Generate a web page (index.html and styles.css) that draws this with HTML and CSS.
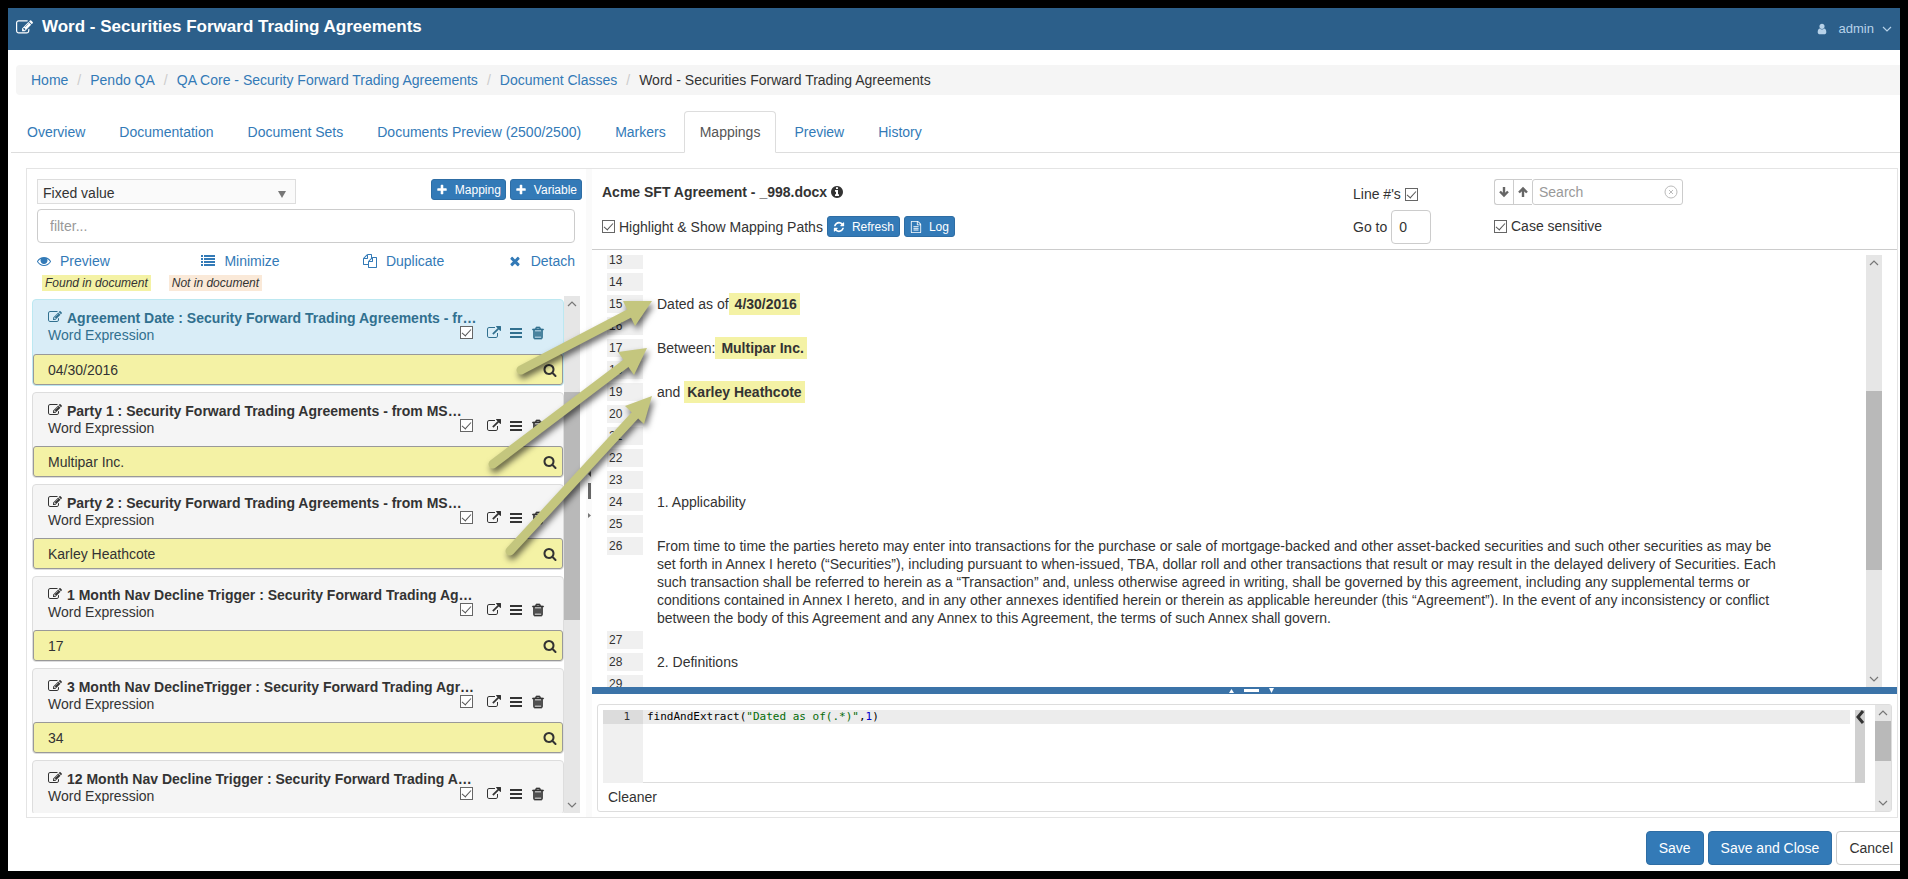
FILE: index.html
```html
<!DOCTYPE html>
<html lang="en">
<head>
<meta charset="utf-8">
<meta name="viewport" content="width=device-width, initial-scale=1">
<title>Word - Securities Forward Trading Agreements</title>
<link rel="stylesheet" href="styles.css">
</head>
<body>
<svg class="sprite" aria-hidden="true">
  <symbol id="i-edit" viewBox="0 0 1792 1792"><path d="M888 1184l116-116-152-152-116 116v56h96v96h56zm440-720q-16-16-33 1l-350 350q-17 17-1 33t33-1l350-350q17-17 1-33zm80 594v190q0 119-84.500 203.500t-203.500 84.500h-832q-119 0-203.500-84.500t-84.500-203.500v-832q0-119 84.500-203.500t203.500-84.500h832q63 0 117 25 15 7 18 23 3 17-9 29l-49 49q-14 14-32 8-23-6-45-6h-832q-66 0-113 47t-47 113v832q0 66 47 113t113 47h832q66 0 113-47t47-113v-126q0-13 9-22l64-64q15-15 35-7t20 29zm-96-738l288 288-672 672h-288v-288zm444 132l-92 92-288-288 92-92q28-28 68-28t68 28l152 152q28 28 28 68t-28 68z"/></symbol>
  <symbol id="i-external" viewBox="0 0 1792 1792"><path d="M1408 928v320q0 119-84.500 203.500t-203.500 84.500h-832q-119 0-203.500-84.500t-84.500-203.500v-832q0-119 84.500-203.500t203.500-84.500h704q14 0 23 9t9 23v64q0 14-9 23t-23 9h-704q-66 0-113 47t-47 113v832q0 66 47 113t113 47h832q66 0 113-47t47-113v-320q0-14 9-23t23-9h64q14 0 23 9t9 23zm384-864v512q0 26-19 45t-45 19-45-19l-176-176-652 652q-10 10-23 10t-23-10l-114-114q-10-10-10-23t10-23l652-652-176-176q-19-19-19-45t19-45 45-19h512q26 0 45 19t19 45z"/></symbol>
  <symbol id="i-bars" viewBox="0 0 14 14"><path d="M1 2h12v2H1zM1 6h12v2H1zM1 10h12v2H1z"/></symbol>
  <symbol id="i-trash" viewBox="0 0 1792 1792"><path d="M704 736v576q0 14-9 23t-23 9h-64q-14 0-23-9t-9-23v-576q0-14 9-23t23-9h64q14 0 23 9t9 23zm256 0v576q0 14-9 23t-23 9h-64q-14 0-23-9t-9-23v-576q0-14 9-23t23-9h64q14 0 23 9t9 23zm256 0v576q0 14-9 23t-23 9h-64q-14 0-23-9t-9-23v-576q0-14 9-23t23-9h64q14 0 23 9t9 23zm128 724v-948h-896v948q0 22 7 40.500t14.500 27 10.500 8.500h832q3 0 10.500-8.500t14.500-27 7-40.500zm-672-1076h448l-48-117q-7-9-17-11h-317q-10 2-17 11zm928 32v64q0 14-9 23t-23 9h-96v948q0 83-47 143.500t-113 60.500h-832q-66 0-113-58.500t-47-141.500v-952h-96q-14 0-23-9t-9-23v-64q0-14 9-23t23-9h309l70-167q15-37 54-63t79-26h320q40 0 79 26t54 63l70 167h309q14 0 23 9t9 23z" stroke="currentColor" stroke-width="90"/></symbol>
  <symbol id="i-search" viewBox="0 0 1792 1792"><path d="M1216 832q0-185-131.500-316.500t-316.500-131.500-316.500 131.500-131.500 316.500 131.500 316.500 316.500 131.500 316.500-131.500 131.500-316.500zm512 832q0 52-38 90t-90 38q-54 0-90-38l-343-342q-179 124-399 124-143 0-273.500-55.500t-225-150-150-225-55.500-273.500 55.500-273.500 150-225 225-150 273.500-55.500 273.500 55.500 225 150 150 225 55.500 273.500q0 220-124 399l343 343q37 37 37 90z"/></symbol>
  <symbol id="i-refresh" viewBox="0 0 1792 1792"><path d="M1639 1056q0 5-1 7-64 268-268 434.500t-478 166.500q-146 0-282.500-55t-243.500-157l-129 129q-19 19-45 19t-45-19-19-45v-448q0-26 19-45t45-19h448q26 0 45 19t19 45-19 45l-137 137q71 66 161 102t187 36q134 0 250-65t186-179q11-17 53-117 8-23 30-23h192q13 0 22.500 9.500t9.500 22.500zm25-800v448q0 26-19 45t-45 19h-448q-26 0-45-19t-19-45 19-45l138-138q-148-137-349-137-134 0-250 65t-186 179q-11 17-53 117-8 23-30 23h-199q-13 0-22.500-9.500t-9.500-22.500v-7q65-268 270-434.500t480-166.500q146 0 284 55.500t245 156.500l130-129q19-19 45-19t45 19 19 45z"/></symbol>
  <symbol id="i-plus" viewBox="0 0 1792 1792"><path d="M1600 736v192q0 40-28 68t-68 28h-416v416q0 40-28 68t-68 28h-192q-40 0-68-28t-28-68v-416h-416q-40 0-68-28t-28-68v-192q0-40 28-68t68-28h416v-416q0-40 28-68t68-28h192q40 0 68 28t28 68v416h416q40 0 68 28t28 68z"/></symbol>
  <symbol id="i-eye" viewBox="0 0 1792 1792"><path d="M1664 960q-152-236-381-353 61 104 61 225 0 185-131.500 316.500t-316.500 131.500-316.500-131.500-131.500-316.500q0-121 61-225-229 117-381 353 133 205 333.500 326.500t434.500 121.500 434.500-121.500 333.500-326.500zm128 0q0 34-20 69-140 230-376.500 368.500t-499.500 138.500-499.500-139-376.500-368q-20-35-20-69t20-69q140-229 376.500-368t499.500-139 499.500 139 376.500 368q20 35 20 69z"/><circle cx="896" cy="850" r="340"/></symbol>
  <symbol id="i-list" viewBox="0 0 14 14"><path d="M0 1h2v2H0zM3 1h11v2H3zM0 4h2v2H0zM3 4h11v2H3zM0 7h2v2H0zM3 7h11v2H3zM0 10h2v2H0zM3 10h11v2H3z"/></symbol>
  <symbol id="i-copy" viewBox="0 0 1792 1792"><path d="M1696 384q40 0 68 28t28 68v1216q0 40-28 68t-68 28h-960q-40 0-68-28t-28-68v-288h-544q-40 0-68-28t-28-68v-672q0-40 20-88t48-76l408-408q28-28 76-48t88-20h416q40 0 68 28t28 68v328q68-40 128-40h416zm-544 213l-299 299h299v-299zm-640-384l-299 299h299v-299zm196 647l316-316v-416h-384v416q0 40-28 68t-68 28h-416v640h512v-256q0-40 20-88t48-76zm956 804v-1152h-384v416q0 40-28 68t-68 28h-416v640h896z"/></symbol>
  <symbol id="i-times" viewBox="0 0 1792 1792"><path d="M1490 1322q0 40-28 68l-136 136q-28 28-68 28t-68-28l-294-294-294 294q-28 28-68 28t-68-28l-136-136q-28-28-28-68t28-68l294-294-294-294q-28-28-28-68t28-68l136-136q28-28 68-28t68 28l294 294 294-294q28-28 68-28t68 28l136 136q28 28 28 68t-28 68l-294 294 294 294q28 28 28 68z"/></symbol>
  <symbol id="i-info" viewBox="0 0 1536 1536"><path transform="translate(-128 -128)" d="M1152 1376v-160q0-14-9-23t-23-9h-96v-512q0-14-9-23t-23-9h-320q-14 0-23 9t-9 23v160q0 14 9 23t23 9h96v320h-96q-14 0-23 9t-9 23v160q0 14 9 23t23 9h448q14 0 23-9t9-23zm-128-896v-160q0-14-9-23t-23-9h-192q-14 0-23 9t-9 23v160q0 14 9 23t23 9h192q14 0 23-9t9-23zm640 416q0 209-103 385.500t-279.500 279.500-385.500 103-385.500-103-279.500-279.500-103-385.500 103-385.500 279.500-279.500 385.500-103 385.500 103 279.500 279.500 103 385.500z"/></symbol>
  <symbol id="i-file" viewBox="0 0 1792 1792"><path d="M1596 380q28 28 48 76t20 88v1152q0 40-28 68t-68 28h-1344q-40 0-68-28t-28-68v-1600q0-40 28-68t68-28h896q40 0 88 20t76 48zm-444-244v376h376q-10-29-22-41l-313-313q-12-12-41-22zm384 1528v-1024h-416q-40 0-68-28t-28-68v-416h-768v1536h1280zm-1024-864q0-14 9-23t23-9h704q14 0 23 9t9 23v64q0 14-9 23t-23 9h-704q-14 0-23-9t-9-23v-64zm736 224q14 0 23 9t9 23v64q0 14-9 23t-23 9h-704q-14 0-23-9t-9-23v-64q0-14 9-23t23-9h704zm0 256q14 0 23 9t9 23v64q0 14-9 23t-23 9h-704q-14 0-23-9t-9-23v-64q0-14 9-23t23-9h704z"/></symbol>
  <symbol id="i-user" viewBox="0 0 1792 1792"><path d="M1536 1399q0 109-62.500 187t-150.500 78h-854q-88 0-150.500-78t-62.500-187q0-85 8.500-160.500t31.500-152 58.500-131 94-89 134.500-34.500q131 128 313 128t313-128q76 0 134.500 34.500t94 89 58.500 131 31.500 152 8.500 160.500zm-256-887q0 159-112.500 271.500t-271.500 112.500-271.500-112.500-112.500-271.500 112.500-271.500 271.500-112.500 271.500 112.500 112.500 271.500z"/></symbol>
  <symbol id="i-down" viewBox="0 0 12 12"><path d="M6 1v8M2 5.500l4 4 4-4" fill="none" stroke="currentColor" stroke-width="2.400"/></symbol>
  <symbol id="i-up" viewBox="0 0 12 12"><path d="M6 11V3M2 6.500l4-4 4 4" fill="none" stroke="currentColor" stroke-width="2.400"/></symbol>
  <symbol id="i-chev-down" viewBox="0 0 10 10"><path d="M1 3l4 4 4-4" fill="none" stroke="currentColor" stroke-width="1.200"/></symbol>
  <symbol id="i-chev-up" viewBox="0 0 10 10"><path d="M1 7l4-4 4 4" fill="none" stroke="currentColor" stroke-width="1.200"/></symbol>
</svg>

<div class="window">
  <header class="topbar">
    <h1 class="topbar-title"><svg class="icon icon-lg"><use href="#i-edit"/></svg>Word - Securities Forward Trading Agreements</h1>
    <button class="user-menu" type="button"><svg class="icon-xs"><use href="#i-user"/></svg><span>admin</span><svg class="icon-sm"><use href="#i-chev-down"/></svg></button>
  </header>

  <nav class="breadcrumb" aria-label="Breadcrumb">
    <a href="#">Home</a><span class="sep">/</span><a href="#">Pendo QA</a><span class="sep">/</span><a href="#">QA Core - Security Forward Trading Agreements</a><span class="sep">/</span><a href="#">Document Classes</a><span class="sep">/</span><span>Word - Securities Forward Trading Agreements</span>
  </nav>

  <nav class="tabs" aria-label="Sections">
    <a class="tab" href="#">Overview</a>
    <a class="tab" href="#">Documentation</a>
    <a class="tab" href="#">Document Sets</a>
    <a class="tab" href="#">Documents Preview (2500/2500)</a>
    <a class="tab" href="#">Markers</a>
    <a class="tab tab-active" href="#" aria-current="page">Mappings</a>
    <a class="tab" href="#">Preview</a>
    <a class="tab" href="#">History</a>
  </nav>

  <main class="panel">
    <section class="side">
      <div class="side-tools">
        <div class="select-wrap">
          <select class="select" aria-label="Mapping type"><option>Fixed value</option></select>
          <svg class="caret" viewBox="0 0 8 7"><path d="M0 0h8L4 7z"/></svg>
        </div>
        <div class="btn-pair">
          <button class="btn-xs" type="button"><svg class="icon-xs"><use href="#i-plus"/></svg>Mapping</button>
          <button class="btn-xs" type="button"><svg class="icon-xs"><use href="#i-plus"/></svg>Variable</button>
        </div>
      </div>
      <input class="filter" type="text" placeholder="filter..." aria-label="Filter mappings">
      <div class="side-links">
        <a href="#"><svg class="icon"><use href="#i-eye"/></svg>Preview</a>
        <a href="#"><svg class="icon"><use href="#i-list"/></svg>Minimize</a>
        <a href="#"><svg class="icon"><use href="#i-copy"/></svg>Duplicate</a>
        <a href="#"><svg class="icon"><use href="#i-times"/></svg>Detach</a>
      </div>
      <div class="legend"><span class="legend-found">Found in document</span><span class="legend-missing">Not in document</span></div>

      <div class="list-wrap">
        <div class="list">
          <article class="map map-active">
            <div class="map-head">
              <h2 class="map-title"><svg class="icon"><use href="#i-edit"/></svg>Agreement Date : Security Forward Trading Agreements - fr…</h2>
              <p class="map-kind">Word Expression</p>
              <div class="map-actions"><input class="check" type="checkbox" checked aria-label="Enabled"><button class="icon-btn" type="button" aria-label="Open"><svg class="icon"><use href="#i-external"/></svg></button><button class="icon-btn" type="button" aria-label="Menu"><svg class="icon"><use href="#i-bars"/></svg></button><button class="icon-btn" type="button" aria-label="Delete"><svg class="icon"><use href="#i-trash"/></svg></button></div>
            </div>
            <div class="map-value"><input type="text" value="04/30/2016" aria-label="Agreement Date"><button class="icon-btn" type="button" aria-label="Find"><svg class="icon"><use href="#i-search"/></svg></button></div>
          </article>
          <article class="map">
            <div class="map-head">
              <h2 class="map-title"><svg class="icon"><use href="#i-edit"/></svg>Party 1 : Security Forward Trading Agreements - from MS…</h2>
              <p class="map-kind">Word Expression</p>
              <div class="map-actions"><input class="check" type="checkbox" checked aria-label="Enabled"><button class="icon-btn" type="button" aria-label="Open"><svg class="icon"><use href="#i-external"/></svg></button><button class="icon-btn" type="button" aria-label="Menu"><svg class="icon"><use href="#i-bars"/></svg></button><button class="icon-btn" type="button" aria-label="Delete"><svg class="icon"><use href="#i-trash"/></svg></button></div>
            </div>
            <div class="map-value"><input type="text" value="Multipar Inc." aria-label="Party 1"><button class="icon-btn" type="button" aria-label="Find"><svg class="icon"><use href="#i-search"/></svg></button></div>
          </article>
          <article class="map">
            <div class="map-head">
              <h2 class="map-title"><svg class="icon"><use href="#i-edit"/></svg>Party 2 : Security Forward Trading Agreements - from MS…</h2>
              <p class="map-kind">Word Expression</p>
              <div class="map-actions"><input class="check" type="checkbox" checked aria-label="Enabled"><button class="icon-btn" type="button" aria-label="Open"><svg class="icon"><use href="#i-external"/></svg></button><button class="icon-btn" type="button" aria-label="Menu"><svg class="icon"><use href="#i-bars"/></svg></button><button class="icon-btn" type="button" aria-label="Delete"><svg class="icon"><use href="#i-trash"/></svg></button></div>
            </div>
            <div class="map-value"><input type="text" value="Karley Heathcote" aria-label="Party 2"><button class="icon-btn" type="button" aria-label="Find"><svg class="icon"><use href="#i-search"/></svg></button></div>
          </article>
          <article class="map">
            <div class="map-head">
              <h2 class="map-title"><svg class="icon"><use href="#i-edit"/></svg>1 Month Nav Decline Trigger : Security Forward Trading Ag…</h2>
              <p class="map-kind">Word Expression</p>
              <div class="map-actions"><input class="check" type="checkbox" checked aria-label="Enabled"><button class="icon-btn" type="button" aria-label="Open"><svg class="icon"><use href="#i-external"/></svg></button><button class="icon-btn" type="button" aria-label="Menu"><svg class="icon"><use href="#i-bars"/></svg></button><button class="icon-btn" type="button" aria-label="Delete"><svg class="icon"><use href="#i-trash"/></svg></button></div>
            </div>
            <div class="map-value"><input type="text" value="17" aria-label="1 Month Nav Decline Trigger"><button class="icon-btn" type="button" aria-label="Find"><svg class="icon"><use href="#i-search"/></svg></button></div>
          </article>
          <article class="map">
            <div class="map-head">
              <h2 class="map-title"><svg class="icon"><use href="#i-edit"/></svg>3 Month Nav DeclineTrigger : Security Forward Trading Agr…</h2>
              <p class="map-kind">Word Expression</p>
              <div class="map-actions"><input class="check" type="checkbox" checked aria-label="Enabled"><button class="icon-btn" type="button" aria-label="Open"><svg class="icon"><use href="#i-external"/></svg></button><button class="icon-btn" type="button" aria-label="Menu"><svg class="icon"><use href="#i-bars"/></svg></button><button class="icon-btn" type="button" aria-label="Delete"><svg class="icon"><use href="#i-trash"/></svg></button></div>
            </div>
            <div class="map-value"><input type="text" value="34" aria-label="3 Month Nav Decline Trigger"><button class="icon-btn" type="button" aria-label="Find"><svg class="icon"><use href="#i-search"/></svg></button></div>
          </article>
          <article class="map">
            <div class="map-head">
              <h2 class="map-title"><svg class="icon"><use href="#i-edit"/></svg>12 Month Nav Decline Trigger : Security Forward Trading A…</h2>
              <p class="map-kind">Word Expression</p>
              <div class="map-actions"><input class="check" type="checkbox" checked aria-label="Enabled"><button class="icon-btn" type="button" aria-label="Open"><svg class="icon"><use href="#i-external"/></svg></button><button class="icon-btn" type="button" aria-label="Menu"><svg class="icon"><use href="#i-bars"/></svg></button><button class="icon-btn" type="button" aria-label="Delete"><svg class="icon"><use href="#i-trash"/></svg></button></div>
            </div>
          </article>
        </div>
        <div class="scrollbar scrollbar-list"><svg class="icon-sm"><use href="#i-chev-up"/></svg><span class="track"></span><span class="thumb"></span><span class="track track-end"></span><svg class="icon-sm"><use href="#i-chev-down"/></svg></div>
      </div>
    </section>

    <div class="splitter">
      <svg width="6" height="50" viewBox="0 0 6 50"><path d="M5 3v6L2 6z" fill="#555"/><path d="M2 15h3v16H2z" fill="#666"/><path d="M2 45v5l3-2.500z" fill="#777"/></svg>
    </div>

    <section class="work">
      <div class="toolbar">
        <div class="tool-doc">
          <h2 class="doc-name">Acme SFT Agreement - _998.docx <svg class="icon-xs"><use href="#i-info"/></svg></h2>
          <div class="tool-row">
            <label class="field"><input class="check" type="checkbox" checked>Highlight &amp; Show Mapping Paths</label>
            <button class="btn-xs" type="button"><svg class="icon-xs"><use href="#i-refresh"/></svg>Refresh</button>
            <button class="btn-xs" type="button"><svg class="icon-xs"><use href="#i-file"/></svg>Log</button>
          </div>
        </div>
        <div class="tool-lines">
          <label class="field line-nos">Line #'s<input class="check" type="checkbox" checked></label>
          <label class="field">Go to<input class="goto" type="text" value="0"></label>
        </div>
        <div class="tool-search">
          <div class="search-group">
            <button class="nav-btn" type="button" aria-label="Next match"><svg class="icon-xs"><use href="#i-down"/></svg></button><button class="nav-btn" type="button" aria-label="Previous match"><svg class="icon-xs"><use href="#i-up"/></svg></button>
            <div class="search-box"><input class="search" type="text" placeholder="Search" aria-label="Search"><svg class="clear" viewBox="0 0 14 14"><circle cx="7" cy="7" r="6"/><path d="M5 5l4 4M9 5l-4 4"/></svg></div>
          </div>
          <label class="field"><input class="check" type="checkbox" checked>Case sensitive</label>
        </div>
      </div>

      <div class="viewer">
        <div class="doc">
          <div class="line"><span class="num">13</span></div>
          <div class="line"><span class="num">14</span></div>
          <div class="line"><span class="num">15</span><p>Dated as of<mark class="mark-lead">4/30/2016</mark></p></div>
          <div class="line"><span class="num">16</span></div>
          <div class="line"><span class="num">17</span><p>Between:<mark class="mark-lead">Multipar Inc.</mark></p></div>
          <div class="line"><span class="num">18</span></div>
          <div class="line"><span class="num">19</span><p>and <mark>Karley Heathcote</mark></p></div>
          <div class="line"><span class="num">20</span></div>
          <div class="line"><span class="num">21</span></div>
          <div class="line"><span class="num">22</span></div>
          <div class="line"><span class="num">23</span></div>
          <div class="line"><span class="num">24</span><p>1. Applicability</p></div>
          <div class="line"><span class="num">25</span></div>
          <div class="line"><span class="num">26</span><p>From time to time the parties hereto may enter into transactions for the purchase or sale of mortgage-backed and other asset-backed securities and such other securities as may be set forth in Annex I hereto (“Securities”), including pursuant to when-issued, TBA, dollar roll and other transactions that result or may result in the delayed delivery of Securities. Each such transaction shall be referred to herein as a “Transaction” and, unless otherwise agreed in writing, shall be governed by this agreement, including any supplemental terms or conditions contained in Annex I hereto, and in any other annexes identified herein or therein as applicable hereunder (this “Agreement”). In the event of any inconsistency or conflict between the body of this Agreement and any Annex to this Agreement, the terms of such Annex shall govern.</p></div>
          <div class="line"><span class="num">27</span></div>
          <div class="line"><span class="num">28</span><p>2. Definitions</p></div>
          <div class="line"><span class="num">29</span></div>
        </div>
        <div class="scrollbar scrollbar-doc"><svg class="icon-sm"><use href="#i-chev-up"/></svg><span class="track"></span><span class="thumb"></span><span class="track track-end"></span><svg class="icon-sm"><use href="#i-chev-down"/></svg></div>
      </div>

      <div class="hsplit"><svg width="46" height="7" viewBox="0 0 46 7"><path d="M0 6h5L2.500 2z"/><path d="M15 2h15v3H15z"/><path d="M40 1h5l-2.500 5z"/></svg></div>

      <div class="editor">
        <div class="editor-body">
          <div class="code">
            <div class="gutter"><span>1</span></div>
            <pre class="code-text"><code>findAndExtract(<span class="str">"Dated as of(.*)"</span>,<span class="lit">1</span>)</code></pre>
            <button class="flyout" type="button" aria-label="Expand"><svg viewBox="0 0 10 14"><path d="M8 1L3 7l5 6" fill="none" stroke="#333" stroke-width="3"/></svg></button>
          </div>
          <h3 class="cleaner">Cleaner</h3>
        </div>
        <div class="scrollbar scrollbar-code"><svg class="icon-sm"><use href="#i-chev-up"/></svg><span class="thumb"></span><span class="track track-end"></span><svg class="icon-sm"><use href="#i-chev-down"/></svg></div>
      </div>
    </section>
  </main>

  <footer class="actions">
    <button class="btn btn-primary" type="button">Save</button>
    <button class="btn btn-primary" type="button">Save and Close</button>
    <button class="btn btn-plain" type="button">Cancel</button>
  </footer>
</div>

<svg class="arrows" aria-hidden="true">
  <g class="arrow"><path d="M521 370L634 311"/><polygon points="652,301 623,301 635,326"/></g>
  <g class="arrow"><path d="M493 464L629 361"/><polygon points="647,348 618,352 634,375"/></g>
  <g class="arrow"><path d="M510 551L638 412"/><polygon points="652,396 625,406 644,424"/></g>
</svg>
</body>
</html>
```

FILE: styles.css
```css
* { box-sizing: border-box; }

body {
  margin: 0;
  padding: 8px;
  background: #000;
  color: #333;
  font: 14px/20px "Liberation Sans", Arial, sans-serif;
}

h1, h2, h3, p, pre { margin: 0; font-size: 14px; font-weight: normal; }
a { color: #337ab7; text-decoration: none; }
button, input, select { font: inherit; color: inherit; }
button { cursor: pointer; }

.sprite { position: absolute; width: 0; height: 0; }
.icon { width: 14px; height: 14px; fill: currentColor; flex: none; }
.icon-lg { width: 17px; height: 17px; }
.icon-sm { width: 10px; height: 10px; flex: none; }
.icon-xs { width: 12px; height: 12px; fill: currentColor; flex: none; }

.window {
  display: flex;
  flex-direction: column;
  height: calc(100vh - 16px);
  min-height: 600px;
  background: #fff;
  overflow: hidden;
}

/* Header */
.topbar {
  display: flex;
  align-items: center;
  justify-content: space-between;
  height: 42px;
  flex: none;
  padding: 0 8px;
  background: #2c5f8a;
  color: #fff;
}
.topbar-title {
  display: flex;
  align-items: center;
  gap: 9px;
  padding-bottom: 4px;
  font-size: 17px;
  font-weight: bold;
}
.user-menu {
  display: flex;
  align-items: center;
  gap: 8px;
  padding: 0;
  border: 0;
  background: none;
  color: #b7d2e9;
  font-size: 13px;
}
.user-menu .icon-xs { margin-right: 3px; }

.breadcrumb {
  flex: none;
  margin: 15px 0 16px 8px;
  padding: 5px 15px;
  background: #f5f5f5;
  border-radius: 4px 0 0 4px;
}
.sep { padding: 0 9px; color: #ccc; }

.tabs {
  display: flex;
  flex: none;
  gap: 2px;
  margin-left: 3px;
  border-bottom: 1px solid #ddd;
}
.tab {
  margin-bottom: -1px;
  padding: 10px 15px;
  border: 1px solid transparent;
  border-radius: 4px 4px 0 0;
}
.tab-active {
  border-color: #ddd #ddd #fff;
  background: #fff;
  color: #555;
}

/* Main panel */
.panel {
  display: flex;
  flex: 1;
  min-height: 0;
  margin: 15px 2px 13px 18px;
  border: 1px solid #e4e4e4;
}
.side {
  display: flex;
  flex-direction: column;
  flex: 0 0 559px;
  min-height: 0;
  padding: 10px 4px 4px 5px;
}
.side-tools {
  display: flex;
  justify-content: space-between;
  padding-left: 5px;
}
.select-wrap { position: relative; width: 259px; }
.select {
  appearance: none;
  width: 100%;
  height: 25px;
  padding: 3px 5px 0;
  border: 1px solid #ddd;
  border-radius: 0;
  background: #fafafa;
}
.caret {
  position: absolute;
  right: 10px;
  top: 12px;
  width: 8px;
  height: 7px;
  fill: #777;
  pointer-events: none;
}
.btn-pair { display: flex; align-items: flex-start; gap: 4px; }
.btn-xs {
  display: flex;
  align-items: center;
  gap: 7px;
  height: 21px;
  padding: 0 5px;
  border: 1px solid #2e6da4;
  border-radius: 3px;
  background: #337ab7;
  color: #fff;
  font-size: 12px;
}
.btn-pair .btn-xs { padding: 0 4px; }
.filter {
  height: 34px;
  flex: none;
  margin: 5px 7px 0 5px;
  padding: 0 12px;
  border: 1px solid #ccc;
  border-radius: 4px;
}
.filter::placeholder, .search::placeholder { color: #999; }
.side-links {
  display: grid;
  grid-template-columns: 167fr 164fr 147fr auto;
  margin: 8px 7px 0 5px;
}
.side-links a { display: flex; align-items: center; gap: 9px; }
.legend {
  display: flex;
  gap: 18px;
  margin: 4px 10px 5px;
  font-size: 12px;
  font-style: italic;
  line-height: 16px;
}
.legend span { padding: 0 3px; }
.legend-found { background: #f4f2a5; }
.legend-missing { background: #fae9d8; }

.list-wrap { display: flex; flex: 1; min-height: 0; margin-right: 2px; }
.list {
  flex: 1;
  min-width: 0;
  padding-top: 3px;
  overflow: hidden;
}
.map {
  margin-bottom: 6px;
  border: 1px solid #ddd;
  border-radius: 4px;
  background: #f5f5f5;
}
.map-active {
  border-color: #bce8f1;
  background: #d9edf7;
  color: #31708f;
}
.map-head {
  display: grid;
  grid-template-columns: 1fr auto;
  align-content: start;
  height: 53px;
  padding: 9px 18px 0 15px;
}
.map-active .map-head { height: 54px; }
.map-title {
  grid-column: 1 / 3;
  height: 17px;
  overflow: hidden;
  font-weight: bold;
  line-height: 18px;
  white-space: nowrap;
}
.map-title .icon { margin-right: 5px; vertical-align: -1px; }
.map-kind { line-height: 18px; }
.map-actions { display: flex; align-items: flex-start; }
.map-actions .check { margin-right: 14px; }
.icon-btn {
  display: flex;
  padding: 0;
  border: 0;
  background: none;
}
.map-actions .icon-btn + .icon-btn { margin-left: 8px; }
.map-value {
  display: flex;
  align-items: center;
  height: 31px;
  padding: 0 5px 0 14px;
  border: 1px solid #999;
  border-radius: 3px;
  background: #f4f2a5;
  color: #333;
}
.map-value input {
  flex: 1;
  min-width: 0;
  padding: 0;
  border: 0;
  background: none;
}

.check {
  display: grid;
  place-items: center;
  appearance: none;
  width: 13px;
  height: 13px;
  flex: none;
  margin: 0;
  border: 1px solid #666;
  background: #fff;
}
.check:checked::before {
  content: "";
  width: 4px;
  height: 8px;
  margin-top: -2px;
  border: solid #555;
  border-width: 0 1px 1px 0;
  transform: rotate(42deg);
}

/* Scrollbars */
.scrollbar {
  display: flex;
  flex-direction: column;
  align-items: center;
  width: 16px;
  flex: none;
  padding: 3px 0;
  background: #e6e6e6;
  color: #777;
}
.thumb { width: 100%; background: #b9b9b9; }
.scrollbar-list .track { flex: 83; }
.scrollbar-list .thumb { flex: 228; }
.scrollbar-list .track-end { flex: 180; }
.scrollbar-doc .track { flex: 123; }
.scrollbar-doc .thumb { flex: 179; }
.scrollbar-doc .track-end { flex: 104; }
.scrollbar-code .thumb { flex: 40; margin-top: 3px; }
.scrollbar-code .track-end { flex: 37; }

.splitter {
  display: flex;
  align-items: center;
  width: 6px;
  flex: none;
  background: #fafafa;
}

/* Document side */
.work {
  display: flex;
  flex-direction: column;
  flex: 1;
  min-width: 0;
}
.toolbar {
  display: flex;
  flex: none;
  height: 81px;
  padding: 10px 214px 0 10px;
  border-bottom: 1px solid #ccc;
}
.tool-doc { flex: 1; }
.doc-name { margin: 3px 0 14px; font-weight: bold; }
.doc-name .icon-xs { vertical-align: -1px; }
.tool-row { display: flex; align-items: center; gap: 4px; }
.field { display: flex; align-items: center; gap: 4px; }
.tool-lines { width: 141px; }
.line-nos { margin: 5px 0 6px; }
.goto {
  width: 40px;
  height: 34px;
  padding: 0 7px;
  border: 1px solid #ccc;
  border-radius: 4px;
}
.tool-search { width: 189px; }
.search-group { display: flex; margin-bottom: 11px; }
.nav-btn {
  display: grid;
  place-items: center;
  width: 19px;
  padding: 0;
  border: 1px solid #ccc;
  border-right: 0;
  background: #fff;
  color: #666;
}
.nav-btn:first-child { border-radius: 3px 0 0 3px; }
.search-box { position: relative; flex: 1; }
.search {
  display: block;
  width: 100%;
  height: 26px;
  padding: 0 30px 0 6px;
  border: 1px solid #ccc;
  border-radius: 3px;
}
.clear {
  position: absolute;
  top: 6px;
  right: 5px;
  width: 14px;
  height: 14px;
  fill: none;
  stroke: #bbb;
}

.viewer {
  display: flex;
  flex: 1;
  min-height: 0;
  padding: 5px 15px 0;
}
.doc { flex: 1; overflow: hidden; }
.line {
  display: grid;
  grid-template-columns: 36px 1fr;
  gap: 14px;
  align-items: start;
  margin-bottom: 4px;
  padding-right: 80px;
  line-height: 18px;
}
.line:first-child { margin-top: -4px; }
.num {
  padding-left: 2px;
  background: #f0f0f0;
  font-size: 12px;
}
mark {
  padding: 3px;
  background: #f4f2a5;
  color: inherit;
  font-weight: bold;
}
.mark-lead { padding-left: 6px; }

.hsplit {
  display: flex;
  justify-content: center;
  height: 7px;
  flex: none;
  padding-left: 15px;
  background: #3b73a8;
  fill: #fff;
}

.editor {
  display: flex;
  flex: none;
  margin: 10px 5px 5px;
  border: 1px solid #ddd;
  border-radius: 3px;
}
.editor-body { flex: 1; padding: 5px 10px 4px 5px; }
.code { display: flex; height: 73px; }
.gutter {
  width: 40px;
  background: #f0f0f0;
  font: 11px/14px "DejaVu Sans Mono", monospace;
}
.gutter span {
  display: block;
  padding-right: 13px;
  background: #dcdcdc;
  text-align: right;
}
.code-text {
  flex: 1;
  border-bottom: 1px solid #ddd;
  color: #000;
  font: 11px/14px "DejaVu Sans Mono", monospace;
}
.code-text code {
  display: block;
  margin-right: 5px;
  padding-left: 4px;
  background: #ececec;
  font: inherit;
}
.str { color: #036a07; }
.lit { color: #0000cd; }
.flyout {
  width: 10px;
  padding: 0;
  border: 0;
  background: #d0d0d0;
}
.flyout svg { display: block; width: 10px; height: 14px; margin-bottom: 59px; }
.cleaner { margin: 4px 0 0 5px; }

.actions {
  display: flex;
  flex: none;
  justify-content: flex-end;
  gap: 4px;
  margin: 0 -6px 6px 0;
}
.btn {
  height: 34px;
  padding: 0 12px;
  border: 1px solid #2e6da4;
  border-radius: 4px;
}
.btn-primary { background: #337ab7; color: #fff; }
.btn-plain { border-color: #ccc; background: #fff; }

/* Pointers from mapped values to the document */
.arrows {
  position: absolute;
  top: 0;
  left: 0;
  width: 700px;
  height: 600px;
  pointer-events: none;
}
.arrow {
  fill: #c4c67e;
  stroke: #c4c67e;
  filter: drop-shadow(2px 4px 3px rgba(0, 0, 0, 0.6));
}
.arrow path { stroke-width: 9px; stroke-linecap: round; }
.arrow polygon { stroke: none; }
```
